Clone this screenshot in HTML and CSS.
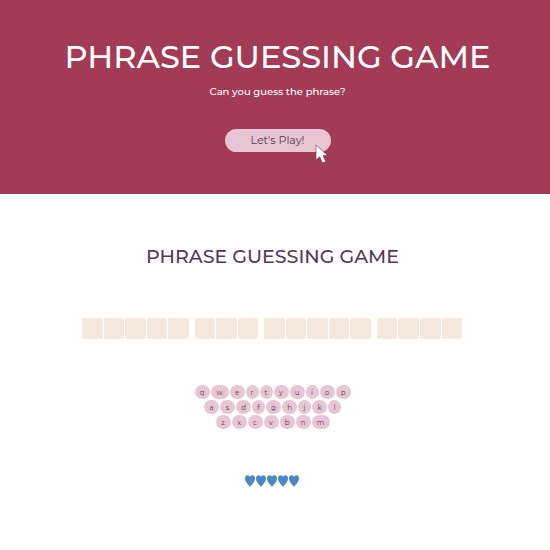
FILE: index.html
```
<!DOCTYPE html>
<html lang="en">
<head>
<meta charset="utf-8">
<title>Phrase Guessing Game</title>
<link rel="stylesheet" href="styles.css">
</head>
<body>
<header class="hero">
  <h1 class="hero-title">PHRASE GUESSING GAME</h1>
  <p class="hero-text">Can you guess the phrase?</p>
  <div class="start">
    <button class="start-button" type="button">Let's Play!</button>
    <svg class="cursor" viewBox="0 0 14 20" aria-hidden="true"><path d="M1 1V16L4.600 12.800L7.600 19L10.800 17.600L8 11.600H12.700Z" fill="#fff" stroke="#6b3850" stroke-width=".6" stroke-linejoin="round"/></svg>
  </div>
</header>
<main class="game">
  <h2 class="game-title">PHRASE GUESSING GAME</h2>
  <div class="phrase">
    <span class="tile"></span><span class="tile"></span><span class="tile"></span><span class="tile"></span><span class="tile"></span>
    <span class="space"></span>
    <span class="tile"></span><span class="tile"></span><span class="tile"></span>
    <span class="space"></span>
    <span class="tile"></span><span class="tile"></span><span class="tile"></span><span class="tile"></span><span class="tile"></span>
    <span class="space"></span>
    <span class="tile"></span><span class="tile"></span><span class="tile"></span><span class="tile"></span>
  </div>
  <div class="keyboard">
    <div class="key-row">
      <button class="key">q</button><button class="key wide">w</button><button class="key">e</button><button class="key narrow">r</button><button class="key narrow">t</button><button class="key">y</button><button class="key">u</button><button class="key narrow">i</button><button class="key">o</button><button class="key">p</button>
    </div>
    <div class="key-row">
      <button class="key">a</button><button class="key">s</button><button class="key">d</button><button class="key narrow">f</button><button class="key">g</button><button class="key">h</button><button class="key narrow">j</button><button class="key">k</button><button class="key narrow">l</button>
    </div>
    <div class="key-row">
      <button class="key">z</button><button class="key">x</button><button class="key">c</button><button class="key">v</button><button class="key">b</button><button class="key">n</button><button class="key wide">m</button>
    </div>
  </div>
  <div class="lives">
    <svg class="heart" viewBox="0 0 10 12"><path d="M5 12C4 9.800 0 7.500 0 3.500C0 1.200 1.200 .3 2.600 .3C3.900 .3 4.700 1 5 2C5.300 1 6.100 .3 7.400 .3C8.800 .3 10 1.200 10 3.500C10 7.500 6 9.800 5 12Z"/></svg>
    <svg class="heart" viewBox="0 0 10 12"><path d="M5 12C4 9.800 0 7.500 0 3.500C0 1.200 1.200 .3 2.600 .3C3.900 .3 4.700 1 5 2C5.300 1 6.100 .3 7.400 .3C8.800 .3 10 1.200 10 3.500C10 7.500 6 9.800 5 12Z"/></svg>
    <svg class="heart" viewBox="0 0 10 12"><path d="M5 12C4 9.800 0 7.500 0 3.500C0 1.200 1.200 .3 2.600 .3C3.900 .3 4.700 1 5 2C5.300 1 6.100 .3 7.400 .3C8.800 .3 10 1.200 10 3.500C10 7.500 6 9.800 5 12Z"/></svg>
    <svg class="heart" viewBox="0 0 10 12"><path d="M5 12C4 9.800 0 7.500 0 3.500C0 1.200 1.200 .3 2.600 .3C3.900 .3 4.700 1 5 2C5.300 1 6.100 .3 7.400 .3C8.800 .3 10 1.200 10 3.500C10 7.500 6 9.800 5 12Z"/></svg>
    <svg class="heart" viewBox="0 0 10 12"><path d="M5 12C4 9.800 0 7.500 0 3.500C0 1.200 1.200 .3 2.600 .3C3.900 .3 4.700 1 5 2C5.300 1 6.100 .3 7.400 .3C8.800 .3 10 1.200 10 3.500C10 7.500 6 9.800 5 12Z"/></svg>
  </div>
</main>
</body>
</html>
```
FILE: styles.css
```
* {
  box-sizing: border-box;
}

body {
  margin: 0;
  background: #fff;
  color: #54385a;
  font-family: Montserrat, Inter, sans-serif;
  font-weight: 500;
}

button {
  border: 0;
  background: #e8c5d3;
  color: inherit;
  font-family: inherit;
  font-weight: inherit;
}

.hero {
  display: flex;
  flex-direction: column;
  align-items: center;
  padding: 36px 16px 42px 21px;
  background: #a23b56;
  color: #fff;
}

.hero-title {
  margin: 0;
  font-size: 32px;
  font-weight: 500;
  line-height: 42px;
  white-space: nowrap;
}

.hero-text {
  margin: 6px 0 29px;
  font-size: 10px;
  line-height: 16px;
}

.start {
  position: relative;
}

.start-button {
  display: block;
  width: 106px;
  height: 23px;
  padding: 0 0 1px;
  border-radius: 12px;
  color: #54385a;
  font-size: 11px;
  font-weight: 400;
}

.cursor {
  position: absolute;
  left: 90px;
  top: 15px;
  width: 14px;
  height: 20px;
}

.game {
  display: flex;
  flex-direction: column;
  align-items: center;
  padding: 50px 16px;
}

.game-title {
  margin: 0 0 49px;
  padding-right: 5px;
  font-size: 19px;
  font-weight: 500;
  line-height: 25px;
}

.phrase {
  display: flex;
  gap: 1px;
  width: 100%;
  max-width: 386px;
  padding-right: 6px;
}

.tile {
  flex: 1;
  height: 21px;
  border-radius: 2px;
  background: #f5e8dc;
}

.space {
  width: 4px;
}

.keyboard {
  display: flex;
  flex-direction: column;
  gap: 1px;
  margin: 46px 0;
  padding-right: 5px;
}

.key-row {
  display: flex;
  justify-content: center;
  gap: 1px;
}

.key {
  width: 15px;
  height: 14px;
  padding: 1px 0 0;
  border-radius: 7px;
  font-size: 7px;
  font-weight: 400;
  line-height: 13px;
}

.key.narrow {
  width: 13px;
}

.key.wide {
  width: 18px;
}

.lives {
  display: flex;
  gap: 1px;
  padding-right: 6px;
}

.heart {
  width: 10px;
  height: 12px;
  fill: #4b87c2;
}
```
